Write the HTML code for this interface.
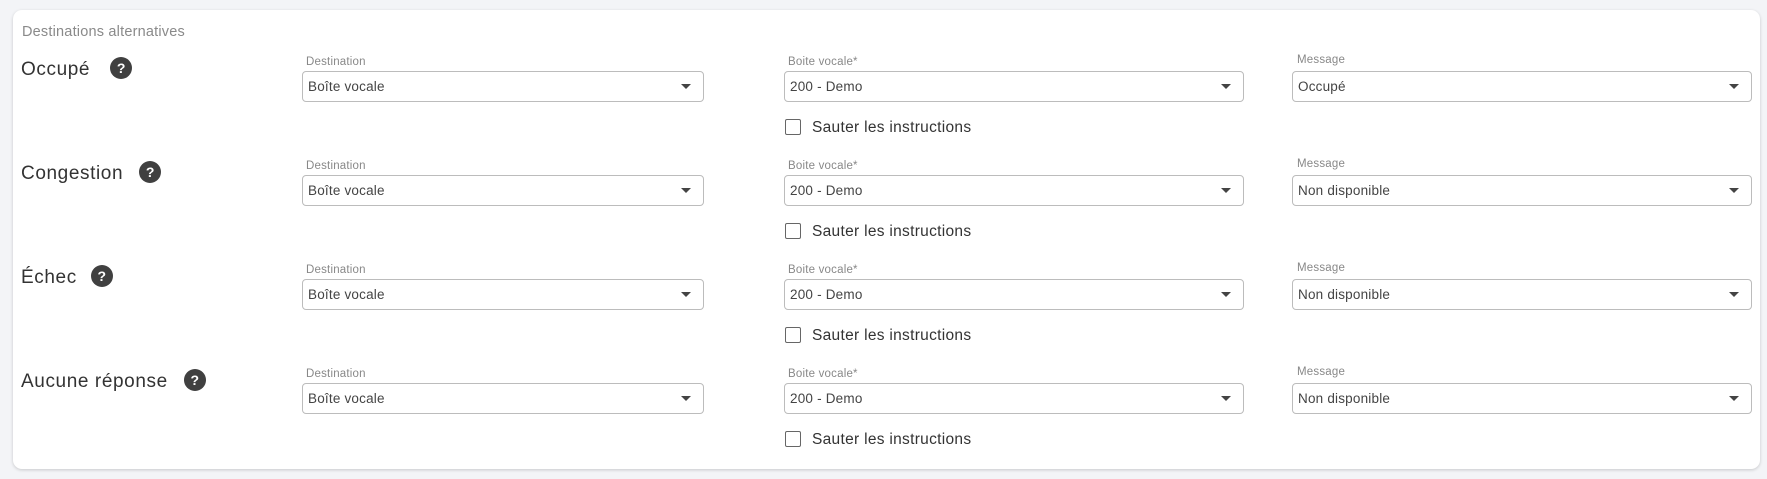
<!DOCTYPE html>
<html><head><meta charset="utf-8"><style>
*{box-sizing:border-box;margin:0;padding:0}
body{width:1767px;height:479px;background:#f3f4f7;font-family:"Liberation Sans",sans-serif;position:relative;overflow:hidden}
.card{position:absolute;left:13px;top:10px;width:1747px;height:459px;background:#fff;border-radius:9px;box-shadow:0 1px 3px rgba(0,0,0,.18)}
.t{position:absolute;left:22px;top:24px;font-size:14.5px;color:#8a8a8a;letter-spacing:.2px}
.lab{position:absolute;left:21px;font-size:19px;color:#333;letter-spacing:.6px}
.q{display:inline-block;width:22px;height:22px;border-radius:50%;background:#404040;color:#fff;font-size:14px;font-weight:bold;text-align:center;line-height:22px;vertical-align:2px;margin-left:20px;letter-spacing:0}
.sl{position:absolute;font-size:11.5px;color:#888;letter-spacing:.2px}
.sel{position:absolute;height:31px;border:1px solid #bcbcbc;border-radius:4px;font-size:13.5px;color:#444;padding-left:5px;line-height:29px;letter-spacing:.2px}
.sel:after{content:"";position:absolute;right:12px;top:12px;border-left:5px solid transparent;border-right:5px solid transparent;border-top:5px solid #444}
.cb{position:absolute;left:785px;width:16px;height:16px;border:1.5px solid #666;border-radius:2px}
.ct{position:absolute;left:812px;font-size:15.5px;color:#333;letter-spacing:.3px}
</style></head><body>
<div class="card"></div>
<div class="t">Destinations alternatives</div>

<div class="lab" style="top:57px">Occupé<span class="q" style="margin-left:20px">?</span></div>
<div class="sl" style="left:306px;top:56px">Destination</div>
<div class="sel" style="left:302px;top:71px;width:402px">Boîte vocale</div>
<div class="sl" style="left:788px;top:56px">Boite vocale*</div>
<div class="sel" style="left:784px;top:71px;width:460px">200 - Demo</div>
<div class="sl" style="left:1297px;top:54px">Message</div>
<div class="sel" style="left:1292px;top:71px;width:460px">Occupé</div>
<div class="cb" style="top:119px"></div><div class="ct" style="top:119px">Sauter les instructions</div>

<div class="lab" style="top:161px">Congestion<span class="q" style="margin-left:16px">?</span></div>
<div class="sl" style="left:306px;top:160px">Destination</div>
<div class="sel" style="left:302px;top:175px;width:402px">Boîte vocale</div>
<div class="sl" style="left:788px;top:160px">Boite vocale*</div>
<div class="sel" style="left:784px;top:175px;width:460px">200 - Demo</div>
<div class="sl" style="left:1297px;top:158px">Message</div>
<div class="sel" style="left:1292px;top:175px;width:460px">Non disponible</div>
<div class="cb" style="top:223px"></div><div class="ct" style="top:223px">Sauter les instructions</div>

<div class="lab" style="top:265px">Échec<span class="q" style="margin-left:14px">?</span></div>
<div class="sl" style="left:306px;top:264px">Destination</div>
<div class="sel" style="left:302px;top:279px;width:402px">Boîte vocale</div>
<div class="sl" style="left:788px;top:264px">Boite vocale*</div>
<div class="sel" style="left:784px;top:279px;width:460px">200 - Demo</div>
<div class="sl" style="left:1297px;top:262px">Message</div>
<div class="sel" style="left:1292px;top:279px;width:460px">Non disponible</div>
<div class="cb" style="top:327px"></div><div class="ct" style="top:327px">Sauter les instructions</div>

<div class="lab" style="top:369px">Aucune réponse<span class="q" style="margin-left:16px">?</span></div>
<div class="sl" style="left:306px;top:368px">Destination</div>
<div class="sel" style="left:302px;top:383px;width:402px">Boîte vocale</div>
<div class="sl" style="left:788px;top:368px">Boite vocale*</div>
<div class="sel" style="left:784px;top:383px;width:460px">200 - Demo</div>
<div class="sl" style="left:1297px;top:366px">Message</div>
<div class="sel" style="left:1292px;top:383px;width:460px">Non disponible</div>
<div class="cb" style="top:431px"></div><div class="ct" style="top:431px">Sauter les instructions</div>
</body></html>
